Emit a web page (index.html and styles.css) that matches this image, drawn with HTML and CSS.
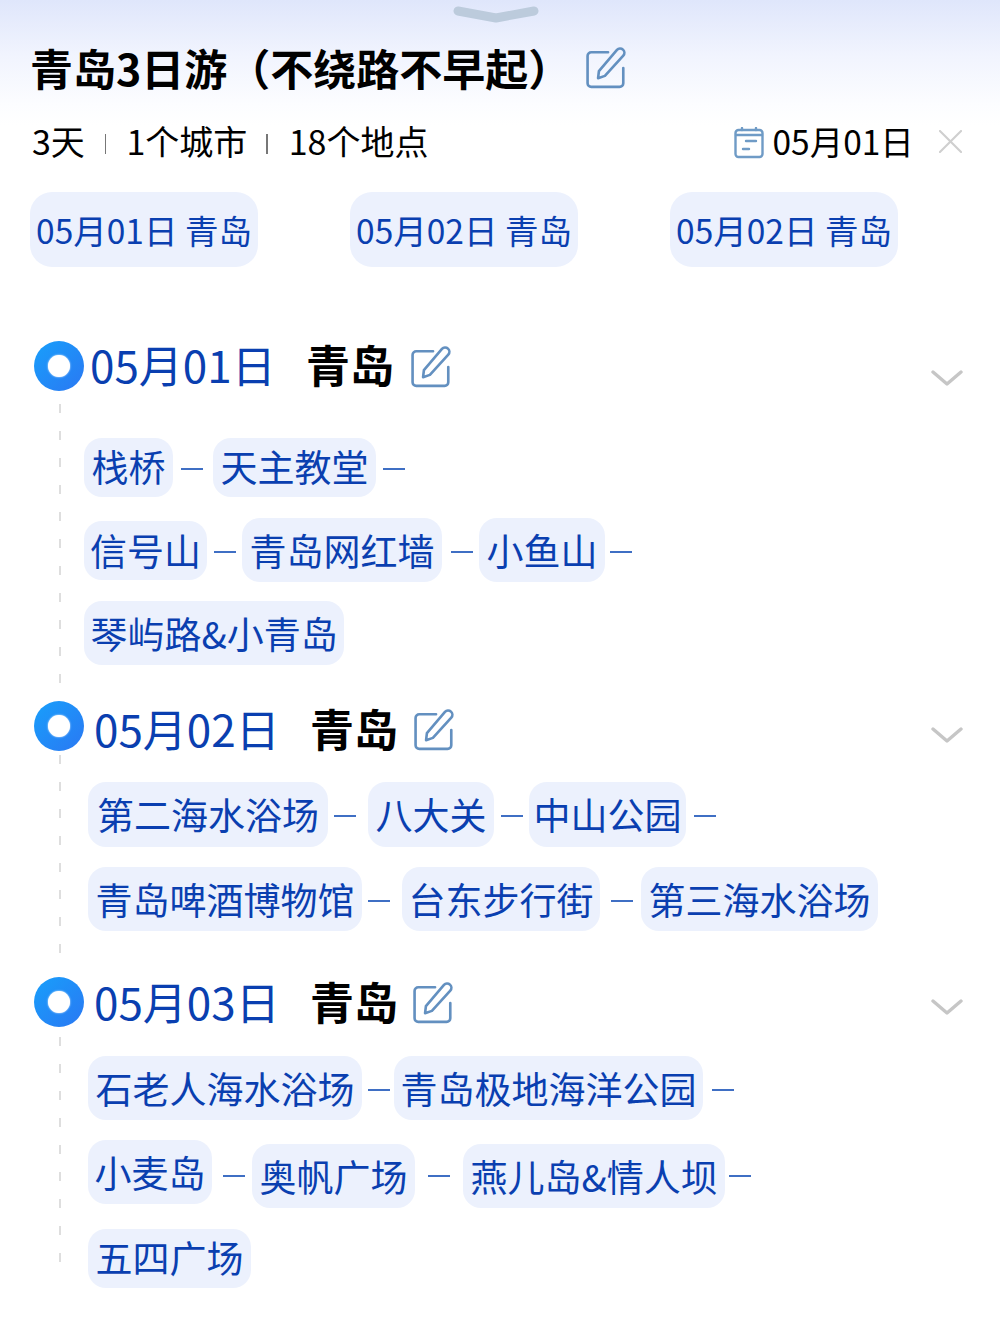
FILE: index.html
```html
<!DOCTYPE html>
<html lang="zh-CN">
<head>
<meta charset="utf-8">
<title>青岛3日游</title>
<link rel="stylesheet" href="styles.css">
</head>
<body>
<svg width="0" height="0" class="defs">
  <symbol id="edit" viewBox="0 0 40 40">
    <path d="M21 5H5a3.500 3.500 0 0 0-3.500 3.500v26A3.500 3.500 0 0 0 5 38h27a3.500 3.500 0 0 0 3.500-3.500V20" fill="none" stroke="currentColor" stroke-width="2.500" stroke-linecap="round"/>
    <path d="M29.500 2.800a4 4 0 0 1 6 5.400L18 27.500l-6.500 2.200.8-6.800z" fill="none" stroke="currentColor" stroke-width="2.500" stroke-linejoin="round"/>
  </symbol>
  <symbol id="chev" viewBox="0 0 32 16">
    <path d="M2 2l14 12L30 2" fill="none" stroke="currentColor" stroke-width="3.400" stroke-linecap="round" stroke-linejoin="round"/>
  </symbol>
</svg>
<main class="page">
  <svg class="handle" width="88" height="18" viewBox="0 0 88 18"><path d="M6 5l38 7 38-7" fill="none" stroke="#bccbdc" stroke-width="9" stroke-linecap="round" stroke-linejoin="round"/></svg>

  <header class="title-row">
    <h1 class="title">青岛3日游（不绕路不早起）</h1>
    <svg class="edit edit-title"><use href="#edit"/></svg>
  </header>

  <div class="meta">
    <span>3天</span><i class="sep"></i><span>1个城市</span><i class="sep sep-b"></i><span>18个地点</span>
    <svg class="cal" width="30" height="32" viewBox="0 0 30 32" fill="none" stroke="#6f9bc6" stroke-width="2.400" stroke-linecap="round"><rect x="1.500" y="3" width="27" height="27" rx="3"/><path d="M8 1v2M22 1v2M2 8h26M12 14h10M9 22h6"/></svg>
    <span class="meta-date">05月01日</span>
    <svg class="close" width="23" height="23" viewBox="0 0 24 24"><path d="M1 1l22 22M23 1L1 23" stroke="#cfcfcf" stroke-width="2.200" stroke-linecap="round"/></svg>
  </div>

  <nav class="tabs">
    <a class="tab">05月01日 青岛</a>
    <a class="tab">05月02日 青岛</a>
    <a class="tab">05月02日 青岛</a>
  </nav>

  <section class="day day-1">
    <div class="day-head">
      <span class="dot"></span>
      <span class="date">05月01日</span>
      <strong class="city">青岛</strong>
      <svg class="edit edit-day"><use href="#edit"/></svg>
      <svg class="chev"><use href="#chev"/></svg>
    </div>
    <div class="day-body">
      <i class="rail"></i>
      <div class="rows">
        <div class="row"><span class="chip">栈桥</span><i class="dash l8 r10"></i><span class="chip">天主教堂</span><i class="dash l7"></i></div>
        <div class="row row-mid"><span class="chip slim">信号山</span><i class="dash l7 r6"></i><span class="chip tall">青岛网红墙</span><i class="dash l9 r6"></i><span class="chip tall">小鱼山</span><i class="dash l5"></i></div>
        <div class="row row-last"><span class="chip tall tight">琴屿路&amp;小青岛</span></div>
      </div>
    </div>
  </section>

  <section class="day day-2">
    <div class="day-head">
      <span class="dot"></span>
      <span class="date">05月02日</span>
      <strong class="city">青岛</strong>
      <svg class="edit edit-day"><use href="#edit"/></svg>
      <svg class="chev"><use href="#chev"/></svg>
    </div>
    <div class="day-body">
      <i class="rail"></i>
      <div class="rows">
        <div class="row row-first"><span class="chip tall wide">第二海水浴场</span><i class="dash l6 r12"></i><span class="chip tall">八大关</span><i class="dash l7 r6"></i><span class="chip tall narrow">中山公园</span><i class="dash l8"></i></div>
        <div class="row"><span class="chip tall">青岛啤酒博物馆</span><i class="dash l6 r12"></i><span class="chip tall slim-s">台东步行街</span><i class="dash l11 r8"></i><span class="chip tall">第三海水浴场</span></div>
      </div>
    </div>
  </section>

  <section class="day day-3">
    <div class="day-head">
      <span class="dot"></span>
      <span class="date">05月03日</span>
      <strong class="city">青岛</strong>
      <svg class="edit edit-day"><use href="#edit"/></svg>
      <svg class="chev"><use href="#chev"/></svg>
    </div>
    <div class="day-body">
      <i class="rail"></i>
      <div class="rows">
        <div class="row"><span class="chip tall">石老人海水浴场</span><i class="dash l6 r4"></i><span class="chip tall slim-s">青岛极地海洋公园</span><i class="dash l9"></i></div>
        <div class="row row-drop"><span class="chip tall slim-s">小麦岛</span><i class="dash l11 r7"></i><span class="chip tall drop">奥帆广场</span><i class="dash l13 r13"></i><span class="chip tall drop">燕儿岛&amp;情人坝</span><i class="dash l4"></i></div>
        <div class="row gap-21"><span class="chip">五四广场</span></div>
      </div>
    </div>
  </section>
</main>
</body>
</html>
```

FILE: styles.css
```css
* { box-sizing: border-box; }
html, body { margin: 0; padding: 0; }
body {
  width: 1000px;
  height: 1333px;
  overflow: hidden;
  color: #000;
  font-family: "Noto Sans CJK SC", "Noto Sans", sans-serif;
  background: linear-gradient(to bottom, #dfe6fb 0, #f1f4fe 55px, #fcfdff 105px, #ffffff 125px);
}
.defs { position: absolute; }
.page { display: flex; flex-direction: column; padding-top: 6px; }

.handle { display: block; margin-left: 452px; }

.title-row { display: flex; align-items: center; height: 52px; margin: 17px 0 0 30px; }
.title { margin: 0; font-size: 43px; line-height: 52px; font-weight: 700; width: 556px; white-space: nowrap; }
.edit { display: block; width: 42px; height: 42px; color: #6390c0; flex: none; }
.edit-title { margin-top: 1px; }

.meta { display: flex; align-items: center; height: 40px; margin: 28px 0 0 32px; font-size: 34px; line-height: 40px; white-space: nowrap; }
.sep { width: 1.500px; height: 20px; background: #777; margin: 6px 20px 0 20px; }
.sep-b { margin-left: 19px; margin-right: 21px; }
.cal { margin: 3px 0 0 305px; }
.meta-date { margin-left: 9px; font-size: 33.500px; }
.close { margin-left: 25px; }

.tabs { display: flex; gap: 92px; margin: 31px 0 0 30px; }
.tab {
  width: 228px; height: 75px; border-radius: 22px;
  display: flex; align-items: center; justify-content: center;
  background: #ecf1fd; color: #0a3fb0;
  font-size: 33.500px; line-height: 40px; white-space: nowrap;
}

.day { padding-left: 34px; }
.day-1 { margin-top: 74px; }
.day-2 { margin-top: 36px; }
.day-3 { margin-top: 46px; }

.day-head { display: flex; align-items: center; height: 50px; padding-right: 37px; }
.dot {
  width: 50px; height: 50px; border-radius: 50%;
  display: flex; align-items: center; justify-content: center; flex: none;
  background: linear-gradient(135deg, #189ffb 0%, #2a78f3 100%);
}
.dot::after { content: ""; width: 22px; height: 22px; border-radius: 50%; background: #fff; box-shadow: 0 0 2px #fff; }
.date { margin: 4px 0 0 10px; width: 181px; font-size: 44px; line-height: 52px; color: #0a3fb0; white-space: nowrap; }
.city { margin: 4px 0 0 35px; width: 88px; font-size: 44px; line-height: 52px; font-weight: 700; white-space: nowrap; }
.edit-day { margin: 8px 0 0 16px; }
.chev { width: 32px; height: 16px; margin: 18px 0 0 auto; color: #c6c6c6; }

.day-1 .date { margin-left: 6px; margin-top: -4px; }
.day-1 .city { margin-top: -4px; }
.day-1 .edit-day { margin-left: 17px; margin-top: 2px; }
.day-1 .chev { margin-top: 24px; }
.day-3 .date, .day-3 .city { margin-top: -2px; }
.day-3 .edit-day { margin-top: 2px; margin-left: 15px; }
.day-3 .chev { margin-top: 10px; }

.day-body { display: flex; }
.rail {
  width: 2px; margin-left: 25px; flex: none;
  background: repeating-linear-gradient(to bottom, #dedede 0, #dedede 9px, transparent 9px, transparent 27px);
}
.day-1 .rail { margin-top: 13px; margin-bottom: -19px; }
.day-2 .rail { margin-top: 4px; margin-bottom: -37px; }
.day-3 .rail { margin-top: 10px; margin-bottom: 26px; }

.rows { display: flex; flex-direction: column; gap: 20px; padding-left: 27px; }
.day-1 .rows { padding: 47px 0 0 23px; }
.day-2 .rows { padding-top: 31px; }
.day-3 .rows { padding-top: 29px; }

.row { display: flex; align-items: center; }
.row-mid { margin-top: 1px; }
.row-last { margin-top: -1px; }
.gap-21 { margin-top: 1px; }
.row-drop { align-items: flex-start; height: 68px; }
.row-drop .dash { align-self: center; }

.chip {
  height: 59px; padding: 0 7.500px 4px; border-radius: 18px;
  display: flex; align-items: center;
  background: #ecf1fd; color: #0a3fb0;
  font-size: 37px; line-height: 44px; white-space: nowrap;
}
.tall { height: 64px; padding-bottom: 1px; }
.row-first .tall { height: 65px; }
.wide { padding-left: 9px; padding-right: 9px; }
.narrow { padding-left: 4.500px; padding-right: 4.500px; }
.slim { padding: 0 6px 1px; }
.slim-s { padding-left: 6.500px; padding-right: 6.500px; }
.tight { padding-left: 6.500px; padding-right: 6.500px; }
.drop { margin-top: 4px; }
.dash { width: 22px; height: 2px; background: #3f6fc4; margin-top: 3px; flex: none; }
.l4 { margin-left: 4px; } .l5 { margin-left: 5px; } .l6 { margin-left: 6px; } .l7 { margin-left: 7px; }
.l8 { margin-left: 8px; } .l9 { margin-left: 9px; } .l11 { margin-left: 11px; } .l13 { margin-left: 13px; }
.r4 { margin-right: 4px; } .r6 { margin-right: 6px; } .r7 { margin-right: 7px; } .r8 { margin-right: 8px; }
.r10 { margin-right: 10px; } .r12 { margin-right: 12px; } .r13 { margin-right: 13px; }
```
